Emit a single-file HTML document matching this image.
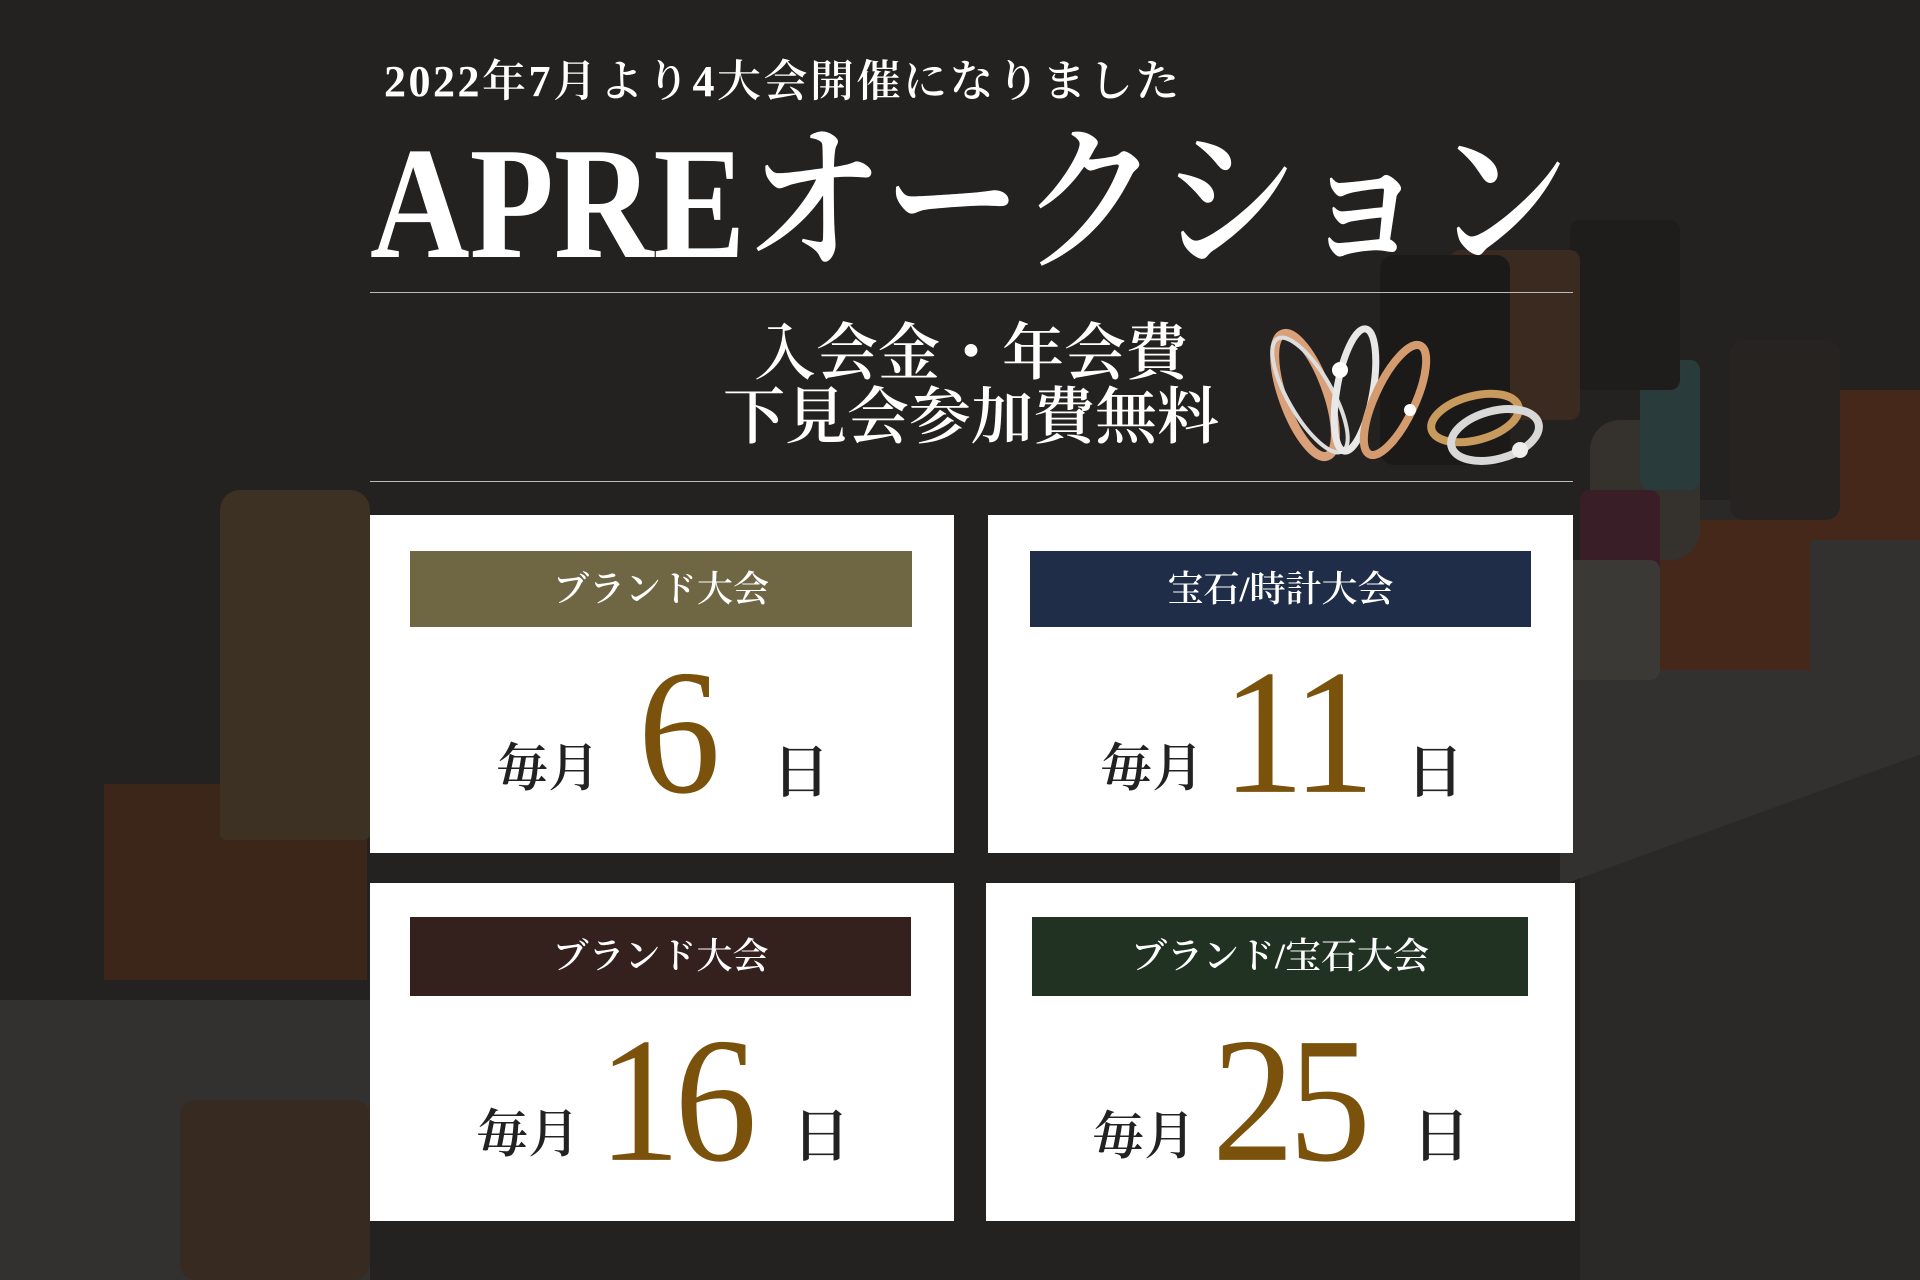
<!DOCTYPE html>
<html><head><meta charset="utf-8"><style>
html,body{margin:0;padding:0}
body{width:1920px;height:1280px;position:relative;overflow:hidden;background:#242220;font-family:"Liberation Serif","Noto Serif CJK JP","Noto Serif CJK SC",serif}
.a{position:absolute}
.s{font-family:"Liberation Serif","Noto Serif CJK JP","Noto Serif CJK SC",serif}
.card{position:absolute;background:#fff}
.lab{position:absolute;color:#fff;font-size:36px;text-align:center;line-height:76px;font-weight:600}
.num{position:absolute;color:#7a520c;font-family:"Liberation Serif",serif;line-height:1}
.jp{position:absolute;color:#222;font-size:52px;line-height:1;font-weight:600}
</style></head><body>
<!-- background decor -->
<div class="a" style="left:1580px;top:500px;width:340px;height:780px;background:#2a2928"></div>
<div class="a" style="left:1560px;top:560px;width:360px;height:260px;background:#33312f;transform:skewY(-20deg)"></div>
<div class="a" style="left:1660px;top:520px;width:150px;height:150px;background:#45281a"></div>
<div class="a" style="left:1800px;top:390px;width:120px;height:150px;background:#45281a"></div>
<div class="a" style="left:1590px;top:420px;width:110px;height:140px;background:#35312d;border-radius:30px"></div>
<div class="a" style="left:1640px;top:360px;width:60px;height:130px;background:#2a3b3c;border-radius:10px"></div>
<div class="a" style="left:1730px;top:340px;width:110px;height:180px;background:#262320;border-radius:14px"></div>
<div class="a" style="left:1580px;top:490px;width:80px;height:90px;background:#3a1e27;border-radius:10px"></div>
<div class="a" style="left:1560px;top:560px;width:100px;height:120px;background:#3b3936;border-radius:10px"></div>
<div class="a" style="left:1570px;top:220px;width:110px;height:170px;background:#1e1d1c;border-radius:10px"></div>
<div class="a" style="left:1450px;top:250px;width:130px;height:170px;background:#3a2a20;border-radius:10px"></div>
<div class="a" style="left:104px;top:784px;width:263px;height:196px;background:#3c2519"></div>
<div class="a" style="left:220px;top:490px;width:150px;height:350px;background:#3c3122;border-radius:20px 20px 6px 6px"></div>
<div class="a" style="left:0px;top:1000px;width:370px;height:280px;background:#323130"></div>
<div class="a" style="left:180px;top:1100px;width:190px;height:180px;background:#372b21;border-radius:16px"></div>
<div class="a" style="left:1380px;top:255px;width:130px;height:210px;background:#1b1a19;border-radius:14px"></div>

<!-- header -->
<div class="a s" style="left:384px;top:52px;font-size:44px;color:#fff;line-height:60px;white-space:nowrap;font-weight:600;letter-spacing:2.5px">2022年7月より4大会開催になりました</div>
<div class="a s" style="left:370px;top:118px;font-size:160px;color:#fff;line-height:170px;white-space:nowrap;transform-origin:0 0;transform:scaleX(0.862);font-weight:600">APREオークション</div>
<div class="a" style="left:370px;top:292px;width:1203px;height:1px;background:#bbb"></div>
<div class="a s" style="left:715px;top:322px;width:512px;text-align:center;font-size:62px;color:#fff;line-height:64px;white-space:nowrap;font-weight:600">入会金・年会費<br>下見会参加費無料</div>
<div class="a" style="left:370px;top:481px;width:1203px;height:1px;background:#bbb"></div>

<!-- rings -->
<svg class="a" style="left:1250px;top:320px" width="310" height="150" viewBox="0 0 310 150">
<ellipse cx="55" cy="75" rx="22" ry="65" fill="none" stroke="#d9a07a" stroke-width="9" transform="rotate(-20 55 75)"/>
<ellipse cx="60" cy="75" rx="22" ry="65" fill="none" stroke="#ddd" stroke-width="4" transform="rotate(-30 60 75)"/>
<ellipse cx="105" cy="70" rx="18" ry="62" fill="none" stroke="#e8e8e8" stroke-width="7" transform="rotate(10 105 70)"/>
<circle cx="90" cy="50" r="8" fill="#fff"/>
<ellipse cx="145" cy="80" rx="20" ry="60" fill="none" stroke="#d49b6e" stroke-width="8" transform="rotate(25 145 80)"/>
<circle cx="160" cy="90" r="6" fill="#fff"/>
<ellipse cx="225" cy="98" rx="45" ry="22" fill="none" stroke="#c99a5d" stroke-width="8" transform="rotate(-15 225 98)"/>
<ellipse cx="245" cy="115" rx="45" ry="24" fill="none" stroke="#d8d8d8" stroke-width="8" transform="rotate(-15 245 115)"/>
<circle cx="270" cy="130" r="8" fill="#eee"/>
</svg>

<!-- cards -->
<div class="card" style="left:370px;top:515px;width:584px;height:338px"></div>
<div class="card" style="left:988px;top:515px;width:585px;height:338px"></div>
<div class="card" style="left:370px;top:883px;width:584px;height:338px"></div>
<div class="card" style="left:986px;top:883px;width:589px;height:338px"></div>

<div class="lab" style="left:410px;top:551px;width:502px;height:76px;background:#6f6744">ブランド大会</div>
<div class="lab" style="left:1030px;top:551px;width:501px;height:76px;background:#1f2d48">宝石/時計大会</div>
<div class="lab" style="left:410px;top:917px;width:501px;height:79px;background:#34211d;line-height:79px">ブランド大会</div>
<div class="lab" style="left:1032px;top:917px;width:496px;height:79px;background:#213223;line-height:79px">ブランド/宝石大会</div>

<!-- card 1 -->
<div class="jp" style="left:496px;top:744px">毎月</div>
<div class="num" style="left:638px;top:656px;font-size:165px;transform:scaleY(1.08);transform-origin:0 100%">6</div>
<div class="jp" style="left:772px;top:744px;font-size:58px">日</div>
<!-- card 2 -->
<div class="jp" style="left:1100px;top:744px">毎月</div>
<div class="num" style="left:1222px;top:656px;font-size:165px;transform:scaleY(1.08);transform-origin:0 100%;letter-spacing:-6px">11</div>
<div class="jp" style="left:1406px;top:744px;font-size:58px">日</div>
<!-- card 3 -->
<div class="jp" style="left:476px;top:1110px">毎月</div>
<div class="num" style="left:598px;top:1024px;font-size:165px;transform:scaleY(1.08);transform-origin:0 100%;letter-spacing:-6px">16</div>
<div class="jp" style="left:792px;top:1108px;font-size:58px">日</div>
<!-- card 4 -->
<div class="jp" style="left:1092px;top:1112px">毎月</div>
<div class="num" style="left:1212px;top:1024px;font-size:165px;transform:scaleY(1.08);transform-origin:0 100%;letter-spacing:-6px">25</div>
<div class="jp" style="left:1412px;top:1108px;font-size:58px">日</div>
</body></html>
